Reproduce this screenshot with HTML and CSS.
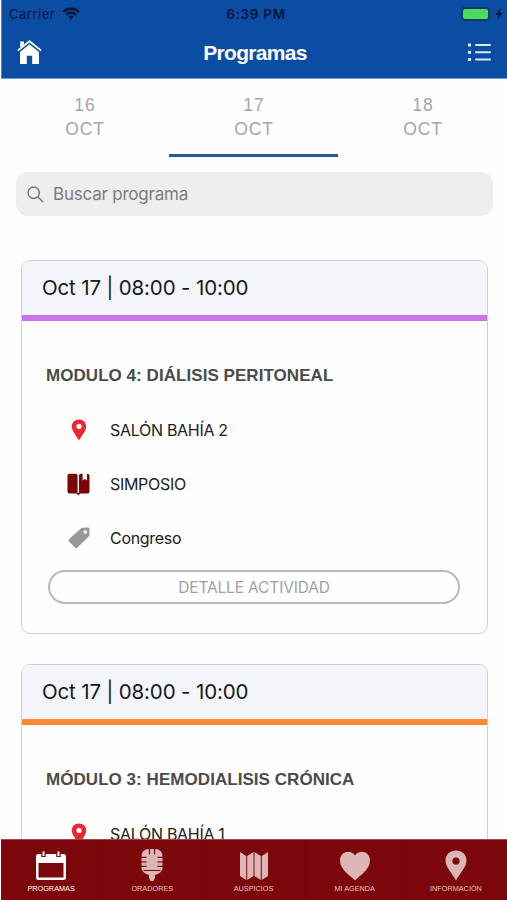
FILE: index.html
```html
<!DOCTYPE html>
<html lang="es">
<head>
  <meta charset="UTF-8" />
  <meta name="viewport" content="width=device-width, initial-scale=1.0" />
  <title>Programas</title>
  <link rel="stylesheet" href="styles.css">
</head>
<body>
  <svg class="sprite" width="0" height="0">
    <symbol id="pin" viewBox="0 0 16 22">
      <path fill-rule="evenodd" d="M8 0.5C3.8 0.5 0.8 3.5 0.8 7.5C0.8 12 5 16 8 21.5C11 16 15.2 12 15.2 7.5C15.2 3.5 12.2 0.5 8 0.5ZM8 4.8A2.6 2.6 0 1 1 8 10A2.6 2.6 0 1 1 8 4.8Z" />
    </symbol>
  </svg>

  <header class="header">
    <div class="status-bar">
      <div class="carrier">
        <span>Carrier</span>
        <svg width="18" height="13" viewBox="0 0 18 13" fill="none" stroke="#03143a" stroke-width="2.5">
          <path d="M1.2 4.8C5.6 0.7 12.4 0.7 16.8 4.8" />
          <path d="M4 7.8C6.8 5.2 11.2 5.2 14 7.8" />
          <path d="M6.3 9.7C7.8 8.2 10.2 8.2 11.7 9.7L9 12.4Z" fill="#03143a" stroke="none" />
        </svg>
      </div>
      <div class="clock">6:39 PM</div>
      <div class="power">
        <span class="battery"></span>
        <svg width="8" height="12" viewBox="0 0 8 12"><path d="M5.5 0L0.5 7H3.5L2.5 12L7.5 5H4.5Z" fill="#03143a" /></svg>
      </div>
    </div>
    <div class="title-bar">
      <svg width="25" height="25" viewBox="0 0 25 25">
        <path d="M3.2 1.6H7V4.5L3.2 7.8Z" fill="#fff" />
        <path d="M0.8 10.6L12.5 1.2L24.2 10.6" fill="none" stroke="#fff" stroke-width="1.8" />
        <path d="M12.5 4.3L22 12V24H15.2V15.8H9.8V24H3V12Z" fill="#fff" />
      </svg>
      <h1>Programas</h1>
      <svg width="23" height="19" viewBox="0 0 23 19" fill="#dcecff">
        <rect x="0" y="0.5" width="3" height="3" /><rect x="7" y="1" width="16" height="2" rx="1" />
        <rect x="0" y="7.8" width="3" height="3" /><rect x="7" y="8.3" width="16" height="2" rx="1" />
        <rect x="0" y="15" width="3" height="3" /><rect x="7" y="15.5" width="16" height="2" rx="1" />
      </svg>
    </div>
  </header>

  <nav class="tabs">
    <a class="tab">16<br>OCT</a>
    <a class="tab active">17<br>OCT</a>
    <a class="tab">18<br>OCT</a>
  </nav>

  <main class="content">
    <div class="search">
      <svg width="17" height="17" viewBox="0 0 17 17" fill="none" stroke="#77777a" stroke-width="1.5">
        <circle cx="6.7" cy="6.7" r="5.7" />
        <path d="M10.8 10.8L16 16" />
      </svg>
      <span>Buscar programa</span>
    </div>

    <article class="card">
      <div class="card-time purple">Oct 17 | 08:00 - 10:00</div>
      <h2>MODULO 4: DIÁLISIS PERITONEAL</h2>
      <ul>
        <li>
          <svg class="icon red" width="16" height="22"><use href="#pin" /></svg>
          <span>SALÓN BAHÍA 2</span>
        </li>
        <li>
          <svg class="icon" width="23" height="23" viewBox="0 0 23 23" fill="#7a0509">
            <path d="M0.5 2.8Q0.5 0.8 2.5 0.8H8.5Q10.6 0.8 10.6 2.5V20.4H2.5Q0.5 20.4 0.5 18.4Z" />
            <path d="M12 2.5Q12 0.8 14 0.8H15.6V7.6L17.8 5.8L20 7.6V0.8Q22.5 0.8 22.5 2.8V18.4Q22.5 20.4 20.5 20.4H12Z" />
            <path d="M9.5 20H13.5L11.3 22.6Z" />
          </svg>
          <span>SIMPOSIO</span>
        </li>
        <li>
          <svg class="icon" width="22" height="22" viewBox="0 0 22 22">
            <path fill-rule="evenodd" d="M12.5 1.7Q13.3 0.9 14.5 0.8L20 0.5Q21.5 0.5 21.5 2V7.5Q21.4 8.8 20.5 9.7L9.2 20.7Q8.1 21.7 7 20.6L1 14.4Q0 13.3 1 12.3ZM17.3 3.2A1.8 1.8 0 1 0 17.3 6.8A1.8 1.8 0 1 0 17.3 3.2Z" fill="#97999c" />
          </svg>
          <span>Congreso</span>
        </li>
      </ul>
      <button type="button">DETALLE ACTIVIDAD</button>
    </article>

    <article class="card">
      <div class="card-time orange">Oct 17 | 08:00 - 10:00</div>
      <h2>MÓDULO 3: HEMODIALISIS CRÓNICA</h2>
      <ul>
        <li>
          <svg class="icon red" width="16" height="22"><use href="#pin" /></svg>
          <span>SALÓN BAHÍA 1</span>
        </li>
      </ul>
    </article>
  </main>

  <footer class="bottom-nav">
    <a class="selected">
      <svg width="32" height="30" viewBox="0 0 32 30">
        <path fill-rule="evenodd" d="M3.5 3H28.5Q31 3 31 5.5V26.5Q31 29 28.5 29H3.5Q1 29 1 26.5V5.5Q1 3 3.5 3ZM3.5 12V26.5H28.5V12Z" fill="#fff" />
        <path d="M8.5 0V6M23.5 0V6" stroke="#7b070b" stroke-width="4.5" />
        <path d="M8.5 0.5V5M23.5 0.5V5" stroke="#fff" stroke-width="2" />
      </svg>
      PROGRAMAS
    </a>
    <a>
      <svg width="24" height="32" viewBox="0 0 24 32">
        <path d="M1.5 20V8Q1.5 0 9 0H15Q22.5 0 22.5 8V20Q21 24.5 15 26V29L13.5 32H10.5L9 29V26Q3 24.5 1.5 20Z" fill="#dcb5b7" />
        <path d="M9.5 0V5.5M14.5 0V5.5M1 8.3H6.5M17.5 8.3H23M1 12.8H6.5M17.5 12.8H23M1 17.3H6.5M17.5 17.3H23M3.5 21.5H20.5" stroke="#7b070b" stroke-width="1.2" />
      </svg>
      ORADORES
    </a>
    <a>
      <svg width="30" height="30" viewBox="0 0 30 30">
        <path d="M1 1L7.2 5V29L1 25ZM8.2 5L14.5 1V25L8.2 29ZM15.5 1L21.8 5V29L15.5 25ZM22.8 5L29 1V25L22.8 29Z" fill="#dcb5b7" />
      </svg>
      AUSPICIOS
    </a>
    <a>
      <svg width="32" height="30" viewBox="0 0 32 30">
        <path d="M16 29.5C12 25 1 19 1 9.5C1 0 12-2 16 4.5C20-2 31 0 31 9.5C31 19 20 25 16 29.5Z" fill="#dcb5b7" />
      </svg>
      MI AGENDA
    </a>
    <a>
      <svg width="22" height="31" viewBox="0 0 22 31">
        <path fill-rule="evenodd" d="M11 0.5C5 0.5 0.5 4.8 0.5 10.5C0.5 17 6.5 22.5 11 30.5C15.5 22.5 21.5 17 21.5 10.5C21.5 4.8 17 0.5 11 0.5ZM11 7.5A3.6 3.6 0 1 1 11 14.7A3.6 3.6 0 1 1 11 7.5Z" fill="#dcb5b7" />
      </svg>
      INFORMACIÓN
    </a>
  </footer>
</body>
</html>
```
FILE: styles.css
```css
* {
  margin: 0;
  padding: 0;
  box-sizing: border-box;
}

body {
  width: 507px;
  height: 900px;
  display: flex;
  flex-direction: column;
  overflow: hidden;
  background: #fefefe;
  font-family: Inter, "Liberation Sans", sans-serif;
}

svg {
  display: block;
  flex: none;
}

.sprite {
  position: absolute;
}

.header {
  flex: none;
  height: 79px;
  margin-left: 1px;
  background: #0b4da2;
  border-left: 1px solid #5287c8;
  border-bottom: 1px solid #6e9dd3;
}

.status-bar {
  height: 27px;
  padding: 0 4px 0 7px;
  display: grid;
  grid-template-columns: 1fr auto 1fr;
  align-items: center;
  color: #03143a;
  font-size: 13px;
}

.carrier {
  display: flex;
  align-items: center;
  gap: 7px;
  letter-spacing: 0.5px;
}

.clock {
  font-weight: 600;
  font-size: 13.5px;
  letter-spacing: 0.7px;
}

.power {
  display: flex;
  justify-content: flex-end;
  align-items: center;
  gap: 5px;
}

.battery {
  width: 29px;
  height: 14px;
  background: #4cdb61;
  border: 2px solid #083b67;
  border-radius: 4px;
}

.title-bar {
  height: 51px;
  padding: 0 16px 0 15px;
  display: flex;
  align-items: center;
  justify-content: space-between;
}

h1 {
  font-family: "Liberation Sans", sans-serif;
  font-size: 21px;
  letter-spacing: -0.7px;
  color: #fff;
}

.tabs {
  flex: none;
  height: 78px;
  display: flex;
}

.tab {
  flex: 1;
  padding: 14px 0 0 1px;
  text-align: center;
  font-family: "Liberation Sans", sans-serif;
  font-size: 17.5px;
  line-height: 24px;
  letter-spacing: 0.9px;
  color: #a6a6a6;
  border-bottom: 3px solid transparent;
}

.tab.active {
  border-color: #285b94;
}

.content {
  flex: 1;
  min-height: 0;
  overflow: hidden;
  padding: 15px 19px 0 21px;
}

.search {
  height: 44px;
  margin: 0 -5px 44px;
  padding: 0 11px;
  display: flex;
  align-items: center;
  gap: 9px;
  background: #eee;
  border-radius: 12px;
  color: #7c7c7f;
  font-size: 17px;
  letter-spacing: -0.22px;
}

.card {
  height: 374px;
  margin-bottom: 30px;
  border: 1px solid #cfcfd1;
  border-radius: 9px;
  overflow: hidden;
}

.card-time {
  height: 60px;
  padding: 0 20px 2px;
  display: flex;
  align-items: center;
  background: #f3f5fa;
  border-bottom: 6px solid;
  font-size: 20.5px;
  letter-spacing: -0.15px;
  color: #17171a;
}

.card-time.purple {
  border-color: #cb75ea;
}

.card-time.orange {
  border-color: #fa8837;
}

h2 {
  padding: 44px 24px 0;
  font-family: "Liberation Sans", sans-serif;
  font-size: 17px;
  line-height: 22px;
  letter-spacing: 0.05px;
  color: #4b4b4b;
  white-space: nowrap;
}

ul {
  list-style: none;
  padding: 16px 0 0 45px;
}

li {
  height: 54px;
  display: grid;
  grid-template-columns: 23px auto;
  column-gap: 20px;
  align-items: center;
  justify-content: start;
  font-size: 16px;
  letter-spacing: -0.3px;
  color: #202022;
}

.icon {
  justify-self: center;
}

.red {
  fill: #ec272d;
}

button {
  display: block;
  width: 412px;
  height: 34px;
  margin: 5px 0 0 26px;
  background: none;
  border: 2px solid #b9b9bb;
  border-radius: 17px;
  font-family: Inter, "Liberation Sans", sans-serif;
  font-size: 15.5px;
  letter-spacing: -0.15px;
  color: #a0a0a3;
}

.bottom-nav {
  flex: none;
  height: 61px;
  margin-left: 1px;
  display: flex;
  background: #7b070b;
  border-top: 1px solid #a04548;
}

.bottom-nav a {
  flex: 1;
  display: flex;
  flex-direction: column;
  align-items: center;
  justify-content: flex-end;
  gap: 3px;
  padding-bottom: 7px;
  font-family: "Liberation Sans", sans-serif;
  font-size: 7.3px;
  line-height: 9px;
  color: #e5c4c5;
  border-right: 1px solid #72060a;
}

.bottom-nav .selected {
  color: #fff;
}
```
